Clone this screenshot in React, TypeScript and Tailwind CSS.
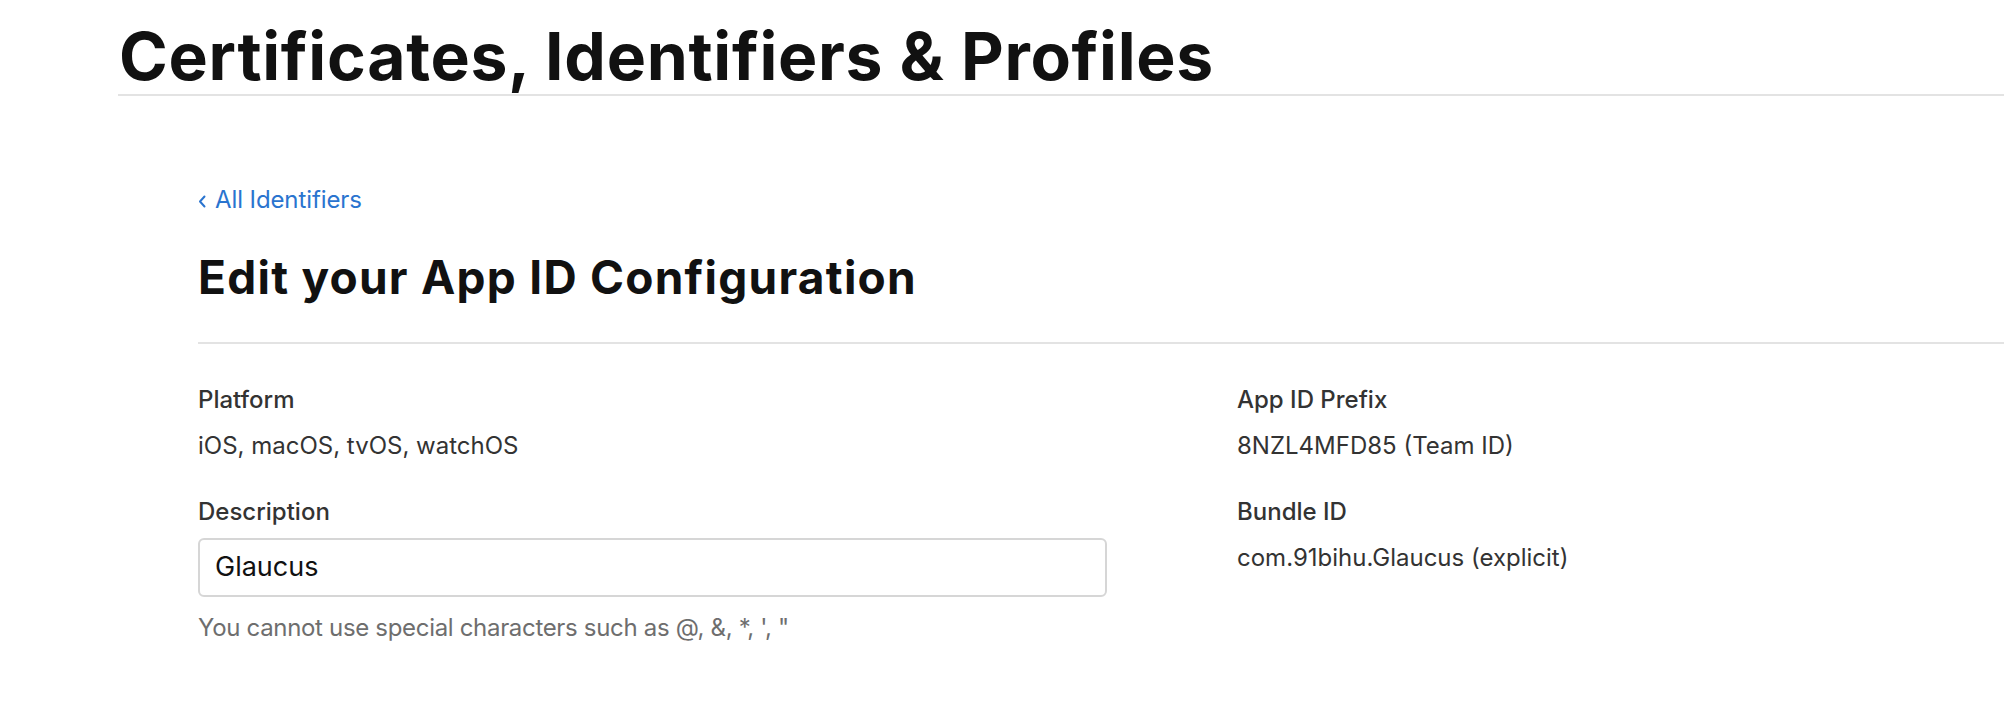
import React from "react";

const font = { fontFamily: 'Inter, "Noto Sans", "Liberation Sans", sans-serif' };

function Field({ label, value }: { label: string; value: string }) {
  return (
    <div className="flex flex-col">
      <div className="text-[24px] leading-[30px] text-[#333333] font-medium">{label}</div>
      <div className="mt-[16px] text-[24px] leading-[30px] text-[#333333]">{value}</div>
    </div>
  );
}

export default function App() {
  return (
    <div className="min-h-[716px] w-full overflow-hidden bg-white" style={font}>
      <header className="pl-[118px] pt-[20px]">
        <div className="border-b-2 border-[#e3e3e3] pb-[2px]">
          <h1 className="pl-[1px] text-[66px] leading-[72px] font-bold tracking-[0.7px] text-[#111111] whitespace-nowrap">
            Certificates, Identifiers &amp; Profiles
          </h1>
        </div>
      </header>

      <main className="pl-[198px] pt-[89px]">
        <a className="flex items-center gap-[9px] text-[24px] leading-[30px] text-[#2a74cf]" href="#">
          <svg width="8" height="13" viewBox="0 0 8 13" className="mt-[3px]">
            <path d="M6.5 1.5 L2 6.5 L6.5 11.5" fill="none" stroke="#2a74cf" strokeWidth="2" strokeLinecap="round" strokeLinejoin="round" />
          </svg>
          <span className="tracking-[-0.1px]">All Identifiers</span>
        </a>

        <div className="mt-[35px] border-b-2 border-[#e3e3e3] pb-[38px]">
          <h2 className="text-[46px] leading-[54px] font-bold tracking-[1.25px] text-[#111111] whitespace-nowrap">
            Edit your App ID Configuration
          </h2>
        </div>

        <div className="flex pt-[41px]">
          <div className="flex w-[909px] flex-col">
            <Field label="Platform" value="iOS, macOS, tvOS, watchOS" />
            <div className="mt-[36px] text-[24px] leading-[30px] text-[#333333] font-medium">Description</div>
            <div className="mt-[11px] flex h-[59px] items-center rounded-[6px] border-2 border-[#d6d6d6] px-[15px]">
              <span className="text-[27px] text-[#111111]">Glaucus</span>
            </div>
            <div className="mt-[16px] text-[24px] leading-[30px] tracking-[-0.32px] text-[#6e6e6e]">
              You cannot use special characters such as @, &amp;, *, &#39;, &quot;
            </div>
          </div>
          <div className="ml-[130px] flex flex-col">
            <Field label="App ID Prefix" value="8NZL4MFD85 (Team ID)" />
            <div className="mt-[36px]">
              <Field label="Bundle ID" value="com.91bihu.Glaucus (explicit)" />
            </div>
          </div>
        </div>
      </main>
    </div>
  );
}
